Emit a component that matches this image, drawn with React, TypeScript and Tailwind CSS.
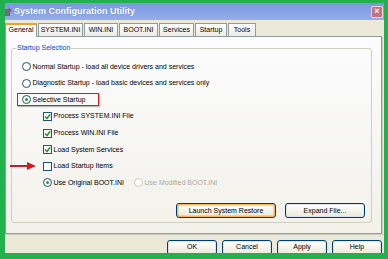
import React from 'react';

const font = { fontFamily: '"Liberation Sans", Arial, sans-serif' };

function Radio({ checked = false, disabled = false }: { checked?: boolean; disabled?: boolean }) {
  return (
    <span
      className={`flex h-[9px] w-[9px] shrink-0 items-center justify-center rounded-full border bg-white ${
        disabled ? 'border-[#cac8bb]' : 'border-[#1c5180]'
      }`}
    >
      {checked && <span className="h-[3px] w-[3px] rounded-full bg-[#21a121]" />}
    </span>
  );
}

function Check({ checked = false }: { checked?: boolean }) {
  return (
    <span className="flex h-[9px] w-[9px] shrink-0 items-center justify-center border border-[#1c5180] bg-white">
      {checked && (
        <svg width="7" height="7" viewBox="0 0 7 7">
          <path d="M1 3.5 L3 5.5 L6.2 1.2" fill="none" stroke="#21a121" strokeWidth="1.6" />
        </svg>
      )}
    </span>
  );
}

function Row({ children, indent = 0 }: { children: React.ReactNode; indent?: number }) {
  return (
    <div className={`flex h-[16.6px] items-center gap-[1.5px] ${indent ? 'pl-[31px]' : 'pl-[10px]'}`}>
      {children}
    </div>
  );
}

function XpButton({ label, focused = false, className = '' }: { label: string; focused?: boolean; className?: string }) {
  return (
    <button
      className={`flex h-[15px] items-center justify-center rounded-[3px] border border-[#003c74] bg-gradient-to-b from-white to-[#ece9d8] text-[7px] text-black ${
        focused ? 'shadow-[inset_0_0_0_1.5px_#f5b657]' : 'shadow-[inset_0_0_0_1px_#dce4f0]'
      } ${className}`}
    >
      {label}
    </button>
  );
}

const tabs = ['General', 'SYSTEM.INI', 'WIN.INI', 'BOOT.INI', 'Services', 'Startup', 'Tools'];
const tabWidths = ['w-[32px]', 'w-[45px]', 'w-[34px]', 'w-[39px]', 'w-[35px]', 'w-[32px]', 'w-[28px]'];

export default function App() {
  return (
    <div className="h-[259px] w-[388px] bg-[#22b14c] pl-[5px] pr-[4px] pt-[3px] pb-[6px]" style={font}>
      <div className="relative flex h-full w-full flex-col overflow-hidden bg-[#ece9d8]">
        {/* title bar */}
        <div className="flex h-[17px] shrink-0 items-center bg-gradient-to-b from-[#7c98df] to-[#93aeea] pr-[1px]">
          <svg width="8" height="10" viewBox="0 0 8 10">
            <rect x="0" y="2" width="5" height="7" fill="#6b6f7a" />
            <path d="M3 0 L7 4 L5 5 Z" fill="#b03a48" />
          </svg>
          <span className="ml-[1px] text-[9px] font-bold text-white [text-shadow:0_0_1px_#5a74c0]">
            System Configuration Utility
          </span>
          <span className="ml-auto flex h-[12px] w-[12px] items-center justify-center rounded-[2px] border border-white/70 bg-[#c76f84] text-[9px] font-bold leading-none text-white">
            ×
          </span>
        </div>

        {/* tabs */}
        <div className="mt-[3px] flex h-[13px] shrink-0 items-end">
          {tabs.map((t, i) => (
            <div
              key={t}
              className={`flex items-center justify-center border border-b-0 border-[#919b9c] text-[7px] text-black ${tabWidths[i]} ${
                i === 0
                  ? 'relative z-10 -mb-px h-[14px] border-t-2 border-t-[#f0a030] bg-[#fcfcfe] pb-[1px]'
                  : 'ml-[1px] h-[13px] bg-gradient-to-b from-white to-[#ecebe6]'
              }`}
            >
              {t}
            </div>
          ))}
        </div>

        {/* panel */}
        <div className="relative mr-[2px] h-[198px] shrink-0 border border-[#919b9c] bg-gradient-to-b from-[#fcfcfe] to-[#f2f1ea] pl-[5px] pr-[9px] pt-[6px] shadow-[1px_1px_0_#d0cec0]">
          <fieldset className="h-[180px] rounded-[3px] border border-[#d0d0bf] px-0">
            <legend className="ml-[4px] px-[1px] text-[7px] text-[#0046d5]">Startup Selection</legend>
            <div className="-mt-[1px] text-[7px] text-black">
              <div className="pt-[6px]">
                <Row>
                  <Radio />
                  <span>Normal Startup - load all device drivers and services</span>
                </Row>
                <Row>
                  <Radio />
                  <span>Diagnostic Startup - load basic devices and services only</span>
                </Row>
                <Row>
                  <Radio checked />
                  <span>Selective Startup</span>
                </Row>
                <Row indent={1}>
                  <Check checked />
                  <span>Process SYSTEM.INI File</span>
                </Row>
                <Row indent={1}>
                  <Check checked />
                  <span>Process WIN.INI File</span>
                </Row>
                <Row indent={1}>
                  <Check checked />
                  <span>Load System Services</span>
                </Row>
                <Row indent={1}>
                  <Check />
                  <span>Load Startup Items</span>
                </Row>
                <Row indent={1}>
                  <Radio checked />
                  <span className="w-[79px]">Use Original BOOT.INI</span>
                  <Radio disabled />
                  <span className="text-[#aca899]">Use Modified BOOT.INI</span>
                </Row>
              </div>
              <div className="mt-[12px] flex justify-end gap-[9px] pr-[6px]">
                <XpButton label="Launch System Restore" focused className="w-[100px]" />
                <XpButton label="Expand File..." className="w-[80px]" />
              </div>
            </div>
          </fieldset>

          {/* red highlight around Selective Startup */}
          <div className="absolute left-[11px] top-[56px] h-[13px] w-[82px] border border-[#cc1f2a] shadow-[1px_1px_1px_rgba(0,0,0,0.25)]" />
        </div>

        {/* red arrow annotation */}
        <svg className="absolute left-[5px] top-[158px]" width="26" height="10" viewBox="0 0 26 10">
          <line x1="0" y1="5" x2="20" y2="5" stroke="#cc1c24" strokeWidth="2" />
          <path d="M17 1 L26 5 L17 9 Z" fill="#cc1c24" />
        </svg>

        {/* dialog buttons */}
        <div className="mt-[6px] flex gap-[5px] pl-[162px]">
          <XpButton label="OK" className="w-[50px]" />
          <XpButton label="Cancel" className="w-[50px]" />
          <XpButton label="Apply" className="w-[50px]" />
          <XpButton label="Help" className="w-[50px]" />
        </div>
      </div>
    </div>
  );
}
